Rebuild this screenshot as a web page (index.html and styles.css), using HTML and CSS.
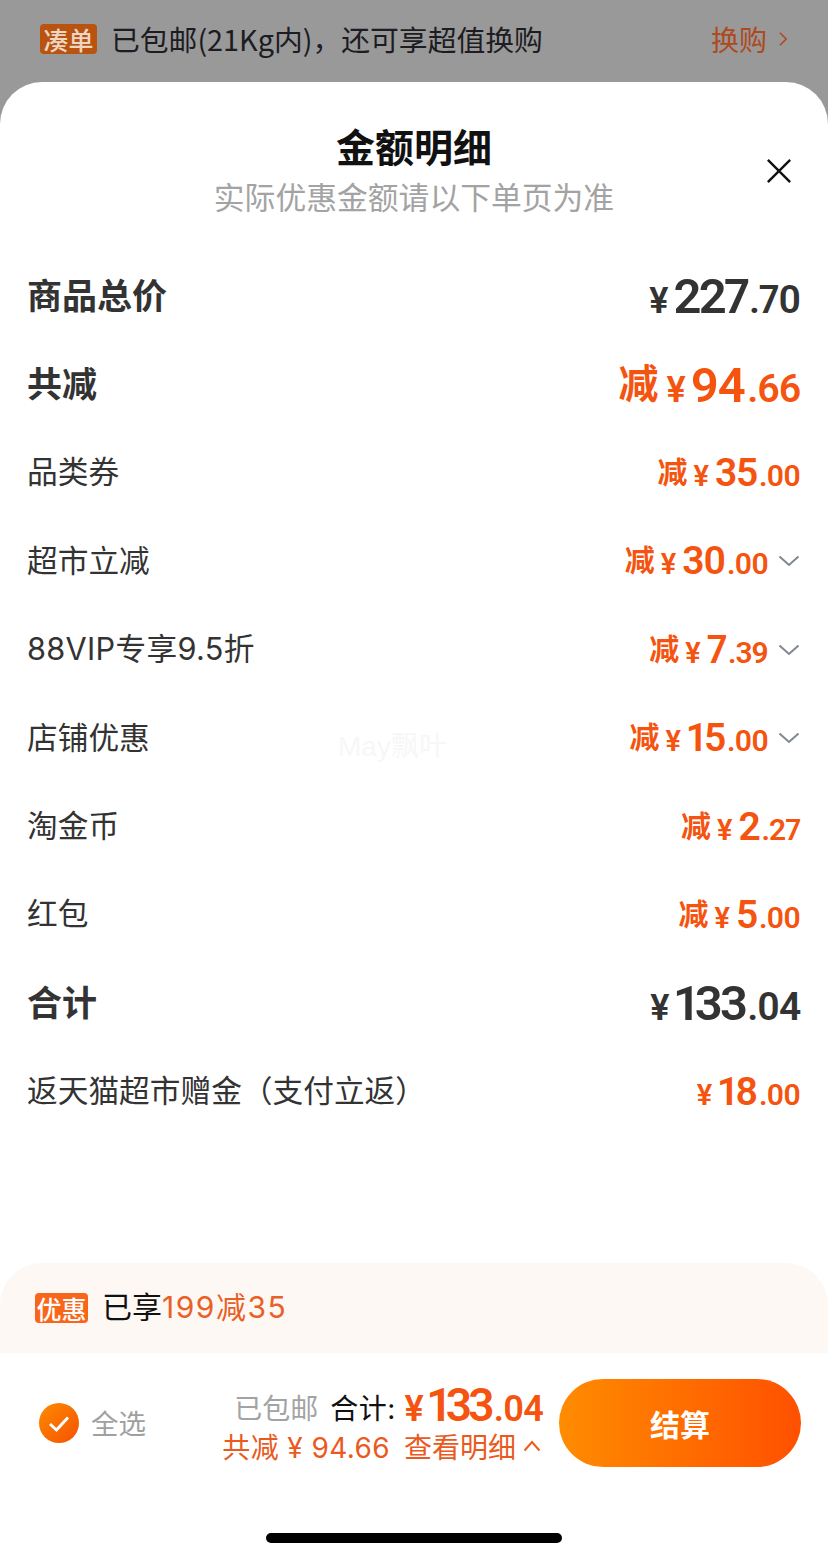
FILE: index.html
```html
<!DOCTYPE html>
<html lang="zh-CN">
<head>
<meta charset="utf-8">
<title>金额明细</title>
<link rel="stylesheet" href="styles.css">
</head>
<body>
<div class="topbar">
  <span class="tag tag-dim">凑单</span>
  <span class="topbar-text">已包邮(21Kg内)，还可享超值换购</span>
  <span class="swap">换购<svg class="swap-arrow" viewBox="0 0 12 20"><path d="M2 3l7 7-7 7" fill="none" stroke="currentColor" stroke-width="1.8"/></svg></span>
</div>
<main class="sheet">
  <header class="head">
    <h1 class="title">金额明细</h1>
    <p class="subtitle">实际优惠金额请以下单页为准</p>
    <svg class="close" viewBox="0 0 28 28"><path d="M2 2l24 24M26 2L2 26" fill="none" stroke="#111" stroke-width="2.6"/></svg>
  </header>
  <section class="list">
    <div class="row row-main"><span class="label">商品总价</span><span class="amt amt-l dark"><i class="yen">¥</i><b>227</b><em>.70</em></span></div>
    <div class="row row-main"><span class="label">共减</span><span class="amt amt-l amt-cut"><i class="cut">减</i><i class="yen">¥</i><b>94</b><em>.66</em></span></div>
    <div class="row"><span class="label">品类券</span><span class="amt"><i class="cut">减</i><i class="yen">¥</i><b>35</b><em>.00</em></span></div>
    <div class="row"><span class="label">超市立减</span><span class="amt"><i class="cut">减</i><i class="yen">¥</i><b>30</b><em>.00</em><svg class="chev" viewBox="0 0 22 12"><path d="M1.500 1.500L11 10l9.500-8.500" fill="none" stroke="#7f8794" stroke-width="2"/></svg></span></div>
    <div class="row"><span class="label label-wide">88VIP专享9.5折</span><span class="amt"><i class="cut">减</i><i class="yen">¥</i><b>7</b><em>.39</em><svg class="chev" viewBox="0 0 22 12"><path d="M1.500 1.500L11 10l9.500-8.500" fill="none" stroke="#7f8794" stroke-width="2"/></svg></span></div>
    <div class="row"><span class="label">店铺优惠</span><span class="amt"><i class="cut">减</i><i class="yen">¥</i><b>15</b><em>.00</em><svg class="chev" viewBox="0 0 22 12"><path d="M1.500 1.500L11 10l9.500-8.500" fill="none" stroke="#7f8794" stroke-width="2"/></svg></span></div>
    <div class="row"><span class="label">淘金币</span><span class="amt"><i class="cut">减</i><i class="yen">¥</i><b>2</b><em>.27</em></span></div>
    <div class="row"><span class="label">红包</span><span class="amt"><i class="cut">减</i><i class="yen">¥</i><b>5</b><em>.00</em></span></div>
    <div class="row row-main"><span class="label">合计</span><span class="amt amt-l dark"><i class="yen">¥</i><b>133</b><em>.04</em></span></div>
    <div class="row"><span class="label">返天猫超市赠金（支付立返）</span><span class="amt"><i class="yen">¥</i><b>18</b><em>.00</em></span></div>
  </section>
  <div class="watermark">May飘叶</div>
  <div class="promo"><span class="tag">优惠</span><span class="promo-text">已享<span class="orange">199减35</span></span></div>
  <footer class="foot">
    <div class="selectall">
      <svg class="check" viewBox="0 0 40 40"><defs><linearGradient id="cg" x1="0" y1="0" x2="1" y2="1"><stop offset="0" stop-color="#ff8a00"/><stop offset="1" stop-color="#f55200"/></linearGradient></defs><circle cx="20" cy="20" r="20" fill="url(#cg)"/><path d="M11 21l6.500 6L29 14.500" fill="none" stroke="#fff" stroke-width="3"/></svg>
      <span class="selectall-text">全选</span>
    </div>
    <div class="summary">
      <div class="sum-top"><span class="free">已包邮</span><span class="sum-label">合计:</span><span class="amt amt-f"><i class="yen">¥</i><b>133</b><em>.04</em></span></div>
      <div class="sum-bottom"><span class="sum-cut">共减 ¥ 94.66</span><span>查看明细</span><svg class="up" viewBox="0 0 18 12"><path d="M1.500 10.500L9 2l7.500 8.500" fill="none" stroke="#f0591c" stroke-width="2"/></svg></div>
    </div>
    <button class="pay">结算</button>
  </footer>
  <div class="home"><span class="home-bar"></span></div>
</main>
</body>
</html>
```
FILE: styles.css
```css
* { box-sizing: border-box; }
html, body { margin: 0; height: 1558px; }
body {
  display: flex;
  flex-direction: column;
  background: #999;
  font-family: "Inter", "Noto Sans CJK SC", sans-serif;
  overflow: hidden;
}
.topbar {
  height: 82px;
  flex: none;
  display: flex;
  align-items: center;
  padding: 0 39px 5px 40px;
  color: #1c1c22;
  font-family: "Noto Sans CJK SC", sans-serif;
  font-size: 28.800px;
}
.tag {
  display: inline-flex;
  align-items: center;
  justify-content: center;
  width: 53px;
  height: 30px;
  background: #f9661a;
  border-radius: 4px;
  color: #fff;
  font-family: "Noto Sans CJK SC", sans-serif;
  font-size: 25px;
  font-weight: 500;
  line-height: 30px;
}
.tag-dim { width: 57px; background: #b9530f; color: #ecd6c4; }
.topbar-text { margin-left: 14px; flex: 1; }
.swap { display: flex; align-items: center; color: #ad4a20; font-size: 28px; gap: 11px; margin-left: -2px; }
.swap-arrow { width: 11px; height: 18px; }
.sheet {
  flex: 1;
  position: relative;
  display: flex;
  flex-direction: column;
  background: #fff;
  border-radius: 42px 42px 0 0;
}
.head { position: relative; height: 170px; flex: none; text-align: center; padding-top: 38px; }
.title { margin: 0; font-family: "Noto Sans CJK SC", sans-serif; font-size: 39px; line-height: 50px; font-weight: 700; color: #111; }
.subtitle { margin: 6px 0 0; font-family: "Noto Sans CJK SC", sans-serif; font-size: 30.800px; line-height: 40px; color: #a3a3a3; }
.close { position: absolute; right: 36px; top: 76px; width: 26px; height: 26px; }
.list { display: flex; flex-direction: column; padding: 0 28px 0 27px; }
.row {
  height: 88.400px;
  display: flex;
  align-items: center;
  justify-content: space-between;
  color: #333;
}
.label { font-size: 30.700px; white-space: nowrap; padding-bottom: 6px; }
.label-wide { letter-spacing: .3px; }
.row-main .label { font-size: 35px; font-weight: 700; }
.amt {
  display: inline-flex;
  align-items: baseline;
  color: #f4540f;
  font-family: "Roboto", sans-serif;
  font-size: 30px;
  font-weight: 600;
  letter-spacing: -1px;
  font-variant-numeric: proportional-nums;
}
.amt i { font-style: normal; }
.amt em { font-style: normal; }
.amt b { font-size: 39px; font-weight: 600; letter-spacing: -1.300px; margin-right: 2px; }
.amt .cut { font-family: "Noto Sans CJK SC", sans-serif; font-size: 30px; font-weight: 700; margin-right: 6px; letter-spacing: 0; transform: translateY(-3px); }
.amt .yen { font-size: 29px; font-weight: 600; margin-right: 6px; letter-spacing: 0; }
.amt-l { font-size: 39px; letter-spacing: -1.200px; }
.amt-l b { font-size: 49px; letter-spacing: -2.800px; margin-right: 2px; }
.amt-l .cut { font-size: 40px; margin-right: 8px; transform: translateY(-4px); }
.amt-l .yen { font-size: 36px; margin-right: 5px; }
.amt-cut b { letter-spacing: -1.500px; margin-right: 3px; }
.dark { color: #333; }
.chev { width: 22px; height: 12px; margin-left: 10px; align-self: center; }
.watermark {
  position: absolute;
  left: 338px;
  top: 650px;
  font-family: "Liberation Sans", "Noto Sans CJK SC", sans-serif;
  font-size: 28px;
  line-height: 30px;
  color: #f7f7f7;
}
.promo {
  margin-top: auto;
  height: 90px;
  flex: none;
  display: flex;
  align-items: center;
  padding: 0 0 0 35px;
  background: #fdf8f3;
  border-radius: 42px 42px 0 0;
  font-size: 30px;
  color: #111;
}
.promo-text { margin-left: 14px; padding-bottom: 6px; }
.orange { color: #ea5f27; letter-spacing: 1.500px; }
.foot {
  height: 140px;
  flex: none;
  display: flex;
  align-items: center;
  padding: 0 27px 0 39px;
}
.selectall { display: flex; align-items: center; gap: 12px; }
.check { width: 40px; height: 40px; }
.selectall-text { font-size: 27.500px; color: #a0a0a0; padding-bottom: 2px; }
.summary { margin-left: auto; margin-right: 16px; padding-bottom: 3px; display: flex; flex-direction: column; align-items: flex-end; }
.sum-top { display: flex; align-items: baseline; height: 46px; margin-bottom: 3px; }
.free { font-size: 28px; color: #a3a3a3; margin-right: 12px; transform: translateY(-2px); }
.sum-label { font-size: 28px; color: #111; margin-right: 9px; letter-spacing: .4px; transform: translateY(-2px); }
.amt-f { font-size: 36px; letter-spacing: -.9px; }
.amt-f b { font-size: 46px; letter-spacing: -3.800px; margin-right: 3px; }
.amt-f .yen { font-size: 36px; margin-right: 4px; }
.sum-bottom { display: flex; align-items: center; gap: 14px; height: 38px; font-size: 28px; color: #ea5a20; white-space: nowrap; }
.sum-cut { letter-spacing: .4px; }
.up { width: 18px; height: 12px; margin-left: -7px; margin-right: 2px; }
.pay {
  width: 242px;
  height: 88px;
  flex: none;
  border: 0;
  border-radius: 44px;
  background: linear-gradient(90deg, #ff8c00, #ff5000);
  color: #fff;
  font-family: "Noto Sans CJK SC", sans-serif;
  font-size: 30px;
  font-weight: 700;
}
.home { flex: none; height: 65px; display: flex; justify-content: center; padding-top: 40px; }
.home-bar { width: 296px; height: 10px; border-radius: 5px; background: #000; }
```
